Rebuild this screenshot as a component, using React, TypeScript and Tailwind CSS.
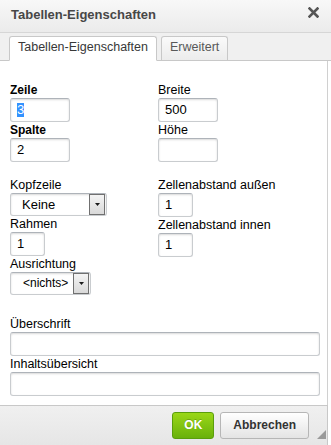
import React from "react";

const inputBase =
  "h-[24px] rounded-[3px] border border-[#c9cccf] border-t-[#aeb3b9] bg-white pl-[6px] text-[13px] leading-[22px] text-black shadow-[inset_0_1px_2px_rgba(0,0,0,0.15)]";

function Label({ text, bold }: { text: string; bold?: boolean }) {
  return (
    <div className={`h-[15px] leading-[15px] text-black ${bold ? "font-bold text-[12px]" : "text-[12.5px]"}`}>
      {text}
    </div>
  );
}

function TextField({
  label,
  value,
  bold,
  width,
  height,
  focused,
}: {
  label: string;
  value?: string;
  bold?: boolean;
  width: string;
  height?: string;
  focused?: boolean;
}) {
  return (
    <div className="flex flex-col">
      <Label text={label} bold={bold} />
      <div
        className={`${inputBase} ${width} ${height ?? ""} ${
          focused ? "border-[#139ff7] border-t-[#139ff7]" : ""
        } flex items-center`}
      >
        {focused ? (
          <span className="bg-[#3392ff] text-white leading-[14px]">{value}</span>
        ) : (
          <span>{value}</span>
        )}
      </div>
    </div>
  );
}

function SelectField({
  label,
  value,
  width,
  small,
}: {
  label: string;
  value: string;
  width: string;
  small?: boolean;
}) {
  return (
    <div className="flex flex-col">
      <Label text={label} />
      <div
        className={`h-[23px] ${width} rounded-[3px] border border-[#c9cccf] border-t-[#aeb3b9] bg-white shadow-[inset_0_1px_2px_rgba(0,0,0,0.15)] flex items-center justify-between pr-[1px] text-black ${
          small ? "pl-[12px] text-[12px]" : "pl-[11px] text-[13px]"
        }`}
      >
        <span className="leading-[15px]">{value}</span>
        <div className="w-[16px] h-[21px] border border-[#707070] bg-gradient-to-b from-[#f4f4f4] to-[#d9d9d9] flex items-center justify-center">
          <svg width="5" height="3" viewBox="0 0 5 3">
            <path d="M0 0h5L2.5 3z" fill="#1a1a1a" />
          </svg>
        </div>
      </div>
    </div>
  );
}

export default function App() {
  return (
    <div className="w-[331px] h-[445px] bg-white flex flex-col font-['Liberation_Sans',Arial,sans-serif] overflow-hidden">
      {/* title bar */}
      <div className="h-[33px] shrink-0 flex items-start justify-between pl-[11px] pr-[12px] pt-[7px] border-b border-[#d6d6d6] bg-gradient-to-b from-[#f8f8f8] to-[#ebebeb]">
        <span className="text-[13px] leading-[16px] font-bold text-[#474747]">Tabellen-Eigenschaften</span>
        <svg width="11" height="11" viewBox="0 0 11 11">
          <path d="M1.5 1.5l8 8M9.5 1.5l-8 8" stroke="#555" strokeWidth="2.6" strokeLinecap="square" />
        </svg>
      </div>

      {/* tabs */}
      <div className="h-[28px] shrink-0 flex items-end gap-[4px] pl-[9px] bg-[#f0f0f0] border-b border-[#c8c8c8]">
        <div className="h-[25px] -mb-px px-[8px] pt-[2px] rounded-t-[3px] border border-[#c8c8c8] border-b-white bg-white text-[12.5px] leading-[16px] text-[#383838]">
          Tabellen-Eigenschaften
        </div>
        <div className="h-[24px] px-[8px] pt-[2px] rounded-t-[3px] border border-b-0 border-[#c8c8c8] bg-gradient-to-b from-[#fafafa] to-[#ececec] text-[12.5px] leading-[16px] text-[#595959]">
          Erweitert
        </div>
      </div>

      {/* contents */}
      <div className="w-[328px] flex-1 border-r border-[#d0d0d0] pl-[10px] pt-[22px]">
        <div className="grid grid-cols-[148px_1fr] gap-y-[1px]">
          <TextField label="Zeile" value="3" bold width="w-[60px]" focused />
          <TextField label="Breite" value="500" width="w-[60px]" />
          <TextField label="Spalte" value="2" bold width="w-[60px]" />
          <TextField label="Höhe" width="w-[60px]" />
        </div>

        <div className="grid grid-cols-[148px_1fr] mt-[16px]">
          <div className="flex flex-col gap-[1px]">
            <SelectField label="Kopfzeile" value="Keine" width="w-[97px]" />
            <TextField label="Rahmen" value="1" width="w-[35px]" height="h-[23px]" />
            <SelectField label="Ausrichtung" value="<nichts>" width="w-[81px]" small />
          </div>
          <div className="flex flex-col gap-[1px]">
            <TextField label="Zellenabstand außen" value="1" width="w-[35px]" />
            <TextField label="Zellenabstand innen" value="1" width="w-[35px]" />
          </div>
        </div>

        <div className="flex flex-col gap-[1px] mt-[22px]">
          <TextField label="Überschrift" width="w-[310px]" />
          <TextField label="Inhaltsübersicht" width="w-[310px]" />
        </div>
      </div>

      {/* footer */}
      <div className="w-[328px] h-[40px] shrink-0 border-t border-r border-[#c8c8c8] bg-gradient-to-b from-[#f0f0f0] to-[#e6e6e6] flex items-start justify-end gap-[6px] pt-[6px] pr-[18px] relative">
        <div className="h-[27px] px-[11px] rounded-[3px] border border-[#5a9e0b] bg-gradient-to-b from-[#9ad717] to-[#69b10b] text-white font-bold text-[12px] leading-[25px] [text-shadow:0_-1px_0_rgba(0,0,0,0.2)]">
          OK
        </div>
        <div className="h-[27px] px-[12px] rounded-[3px] border border-[#b6b6b6] bg-gradient-to-b from-white to-[#e4e4e4] text-[#333] font-bold text-[12px] leading-[25px]">
          Abbrechen
        </div>
        <svg width="9" height="9" viewBox="0 0 9 9" className="absolute right-[1px] bottom-[6px]">
          <path d="M9 0V9H0z" fill="#9a9a9a" />
        </svg>
      </div>
    </div>
  );
}
